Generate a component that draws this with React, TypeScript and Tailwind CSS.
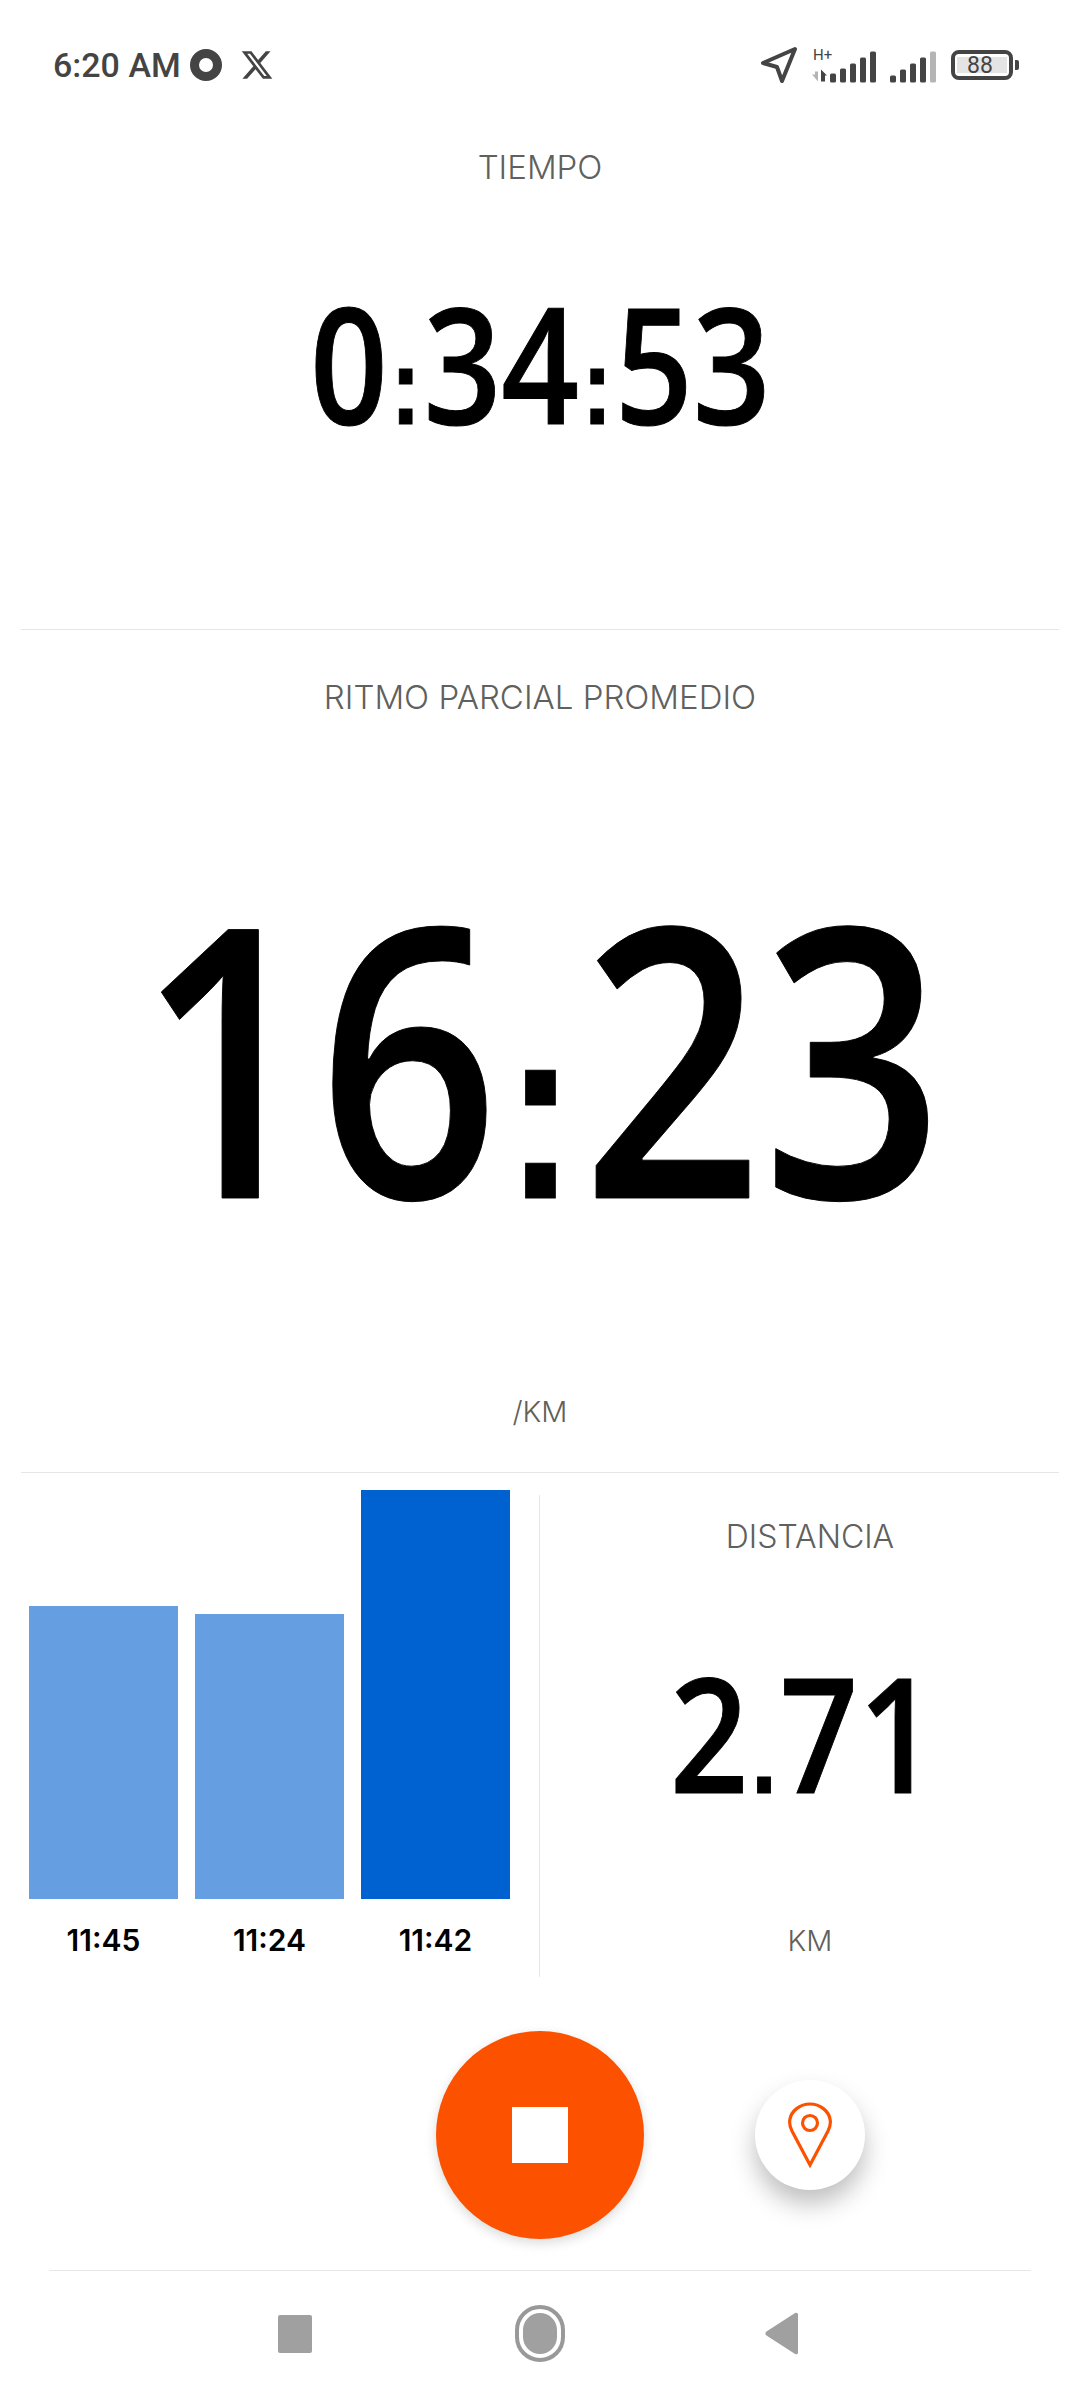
import { FaXTwitter } from 'react-icons/fa6';

const labelClass = "font-['Inter',sans-serif] font-light text-[#60605c] leading-none";
const digitClass = "font-['Open_Sans',sans-serif] font-semibold [-webkit-text-stroke:1px_black] text-black leading-none whitespace-nowrap";

const splits = [
  { label: '11:45', height: 'h-[293px]', color: 'bg-[#669EE2]' },
  { label: '11:24', height: 'h-[285px]', color: 'bg-[#669EE2]' },
  { label: '11:42', height: 'h-[409px]', color: 'bg-[#0061D1]' },
];

// the separators are square in the reference, Open Sans has round ones
function Digits({ text }: { text: string }) {
  return (
    <>
      {text.split(/([:.])/).map((part, i) =>
        part === ':' || part === '.' ? (
          <span key={i} className="font-['Liberation_Sans',sans-serif] font-bold text-[0.67em] mx-[0.03em]">
            {part}
          </span>
        ) : (
          <span key={i}>{part}</span>
        ),
      )}
    </>
  );
}

function NavArrow() {
  return (
    <svg width="38" height="38" viewBox="0 0 38 38" fill="none" stroke="#444" strokeWidth="4" strokeLinejoin="round">
      <path d="M35 3 3 17l14 4 5 14z" />
    </svg>
  );
}

function Signal() {
  return (
    <svg width="136" height="44" viewBox="0 -6 136 44" fill="#444">
      <text x="2" y="11" fontSize="15" fontFamily="Roboto, sans-serif" fill="#444">H+</text>
      <g transform="translate(0,-3.500)">
        <path d="M4 26h3v10L1 29h3z" fill="#b5b5b5" />
        <path d="M10 24l6 6h-2v6h-4z" />
        <rect x="19" y="28" width="6" height="9" rx="1.5" />
        <rect x="29" y="23" width="6" height="14" rx="1.5" />
        <rect x="39" y="18" width="6" height="19" rx="1.5" />
        <rect x="49" y="12" width="6" height="25" rx="1.5" />
        <rect x="59" y="6" width="6" height="31" rx="1.5" />
        <rect x="79" y="30" width="6" height="7" rx="1.5" />
        <rect x="89" y="24" width="6" height="13" rx="1.5" />
        <rect x="99" y="18" width="6" height="19" rx="1.5" />
        <rect x="109" y="12" width="6" height="25" rx="1.5" />
        <rect x="119" y="6" width="6" height="31" rx="1.5" fill="#b5b5b5" />
      </g>
    </svg>
  );
}

function Battery() {
  return (
    <div className="flex items-center gap-[2px]">
      <div className="w-[62px] h-[30px] rounded-[8px] border-[4px] border-[#444] py-[3px] px-[2px] flex">
        <div className="flex-1 bg-[#e4e4e4] flex items-center justify-center font-['Roboto',sans-serif] text-[#444] text-[23px] leading-none pr-[4px]">
          88
        </div>
      </div>
      <div className="w-[4px] h-[10px] rounded-r-[2px] bg-[#444]" />
    </div>
  );
}

function StatusBar() {
  return (
    <div className="h-[130px] shrink-0 flex items-center justify-between pl-[53px] pr-[61px]">
      <div className="flex items-center">
        <span className="font-['Roboto',sans-serif] font-medium text-[34px] leading-none text-[#444]">6:20 AM</span>
        <div className="ml-[9px] w-[32px] h-[32px] rounded-full border-[9px] border-[#444]" />
        <FaXTwitter className="ml-[18px] text-[#444]" size={34} />
      </div>
      <div className="flex items-center">
        <NavArrow />
        <div className="ml-[13px]">
          <Signal />
        </div>
        <div className="ml-[4px]">
          <Battery />
        </div>
      </div>
    </div>
  );
}

function Pin() {
  return (
    <svg width="44" height="66" viewBox="0 0 44 66" fill="none" stroke="#FC5200" strokeWidth="3.2">
      <path d="M22 63 4 29C1 23 1.500 20 1.800 18 3 9 12 2 22 2s19 7 20.200 16c.3 2 .8 5-2.200 11z" />
      <circle cx="22" cy="21" r="7.500" />
    </svg>
  );
}

export default function App() {
  return (
    <div className="w-[1080px] h-[2400px] bg-white flex flex-col overflow-hidden">
      <StatusBar />

      <div className="h-[499px] shrink-0 flex flex-col items-center pt-[21px]">
        <div className={`${labelClass} text-[33px]`}>TIEMPO</div>
        <div className={`${digitClass} text-[162px] mt-[96px] scale-x-[0.84]`}>
          <Digits text="0:34:53" />
        </div>
      </div>

      <div className="h-px shrink-0 mx-[21px] bg-[#e6e6e6]" />

      <div className="h-[842px] shrink-0 flex flex-col items-center pt-[51px]">
        <div className={`${labelClass} text-[33px]`}>RITMO PARCIAL PROMEDIO</div>
        <div className={`${digitClass} text-[376px] mt-[150px] scale-x-[0.84]`}>
          <Digits text="16:23" />
        </div>
        <div className={`${labelClass} text-[29px] mt-auto mb-[46px]`}>/KM</div>
      </div>

      <div className="h-px shrink-0 mx-[21px] bg-[#e6e6e6]" />

      <div className="h-[520px] shrink-0 flex">
        <div className="w-[539px] shrink-0 pl-[29px] flex flex-col pt-[16px]">
          <div className="h-[410px] flex items-end gap-[17px]">
            {splits.map((s) => (
              <div key={s.label} className={`w-[149px] ${s.height} ${s.color}`} />
            ))}
          </div>
          <div className="flex gap-[17px] mt-[26px]">
            {splits.map((s) => (
              <div
                key={s.label}
                className="w-[149px] text-center font-['Inter',sans-serif] font-semibold text-[30px] leading-none text-black"
              >
                {s.label}
              </div>
            ))}
          </div>
        </div>
        <div className="w-px h-[482px] mt-[22px] bg-[#e6e6e6]" />
        <div className="flex-1 flex flex-col items-center pt-[48px]">
          <div className={`${labelClass} text-[32px]`}>DISTANCIA</div>
          <div className={`${digitClass} text-[160px] mt-[98px] -translate-x-[7px] scale-x-[0.86]`}>
            <Digits text="2.71" />
          </div>
          <div className={`${labelClass} text-[29px] mt-[115px]`}>KM</div>
        </div>
      </div>

      <div className="mt-[38px] grid grid-cols-[1fr_208px_1fr] items-center">
        <div />
        <div className="w-[208px] h-[208px] rounded-full bg-[#FC5200] shadow-[0_4px_12px_rgba(0,0,0,0.15)] flex items-center justify-center">
          <div className="w-[56px] h-[56px] bg-white" />
        </div>
        <div className="pl-[111px]">
          <div className="w-[110px] h-[110px] rounded-full bg-white shadow-[0_14px_24px_rgba(0,0,0,0.25)] flex items-center justify-center">
            <Pin />
          </div>
        </div>
      </div>

      <div className="mt-[31px] h-px mx-[49px] bg-[#e6e6e6]" />

      <div className="flex-1 flex items-center pb-[4px] pl-[278px]">
        <div className="w-[34px] h-[38px] rounded-[2px] bg-[#a0a0a0]" />
        <div className="ml-[203px] w-[50px] h-[57px] rounded-full border-[4px] border-[#999] p-[4px]">
          <div className="w-full h-full rounded-full bg-[#a0a0a0]" />
        </div>
        <svg width="33" height="43" viewBox="0 0 34 44" fill="#a0a0a0" className="ml-[200px]">
          <path d="M31 1 1.500 20c-1.500 1-1.500 3 0 4L31 43c1.500 1 3 0 3-1.500v-39C34 1 32.500 0 31 1z" />
        </svg>
      </div>
    </div>
  );
}
